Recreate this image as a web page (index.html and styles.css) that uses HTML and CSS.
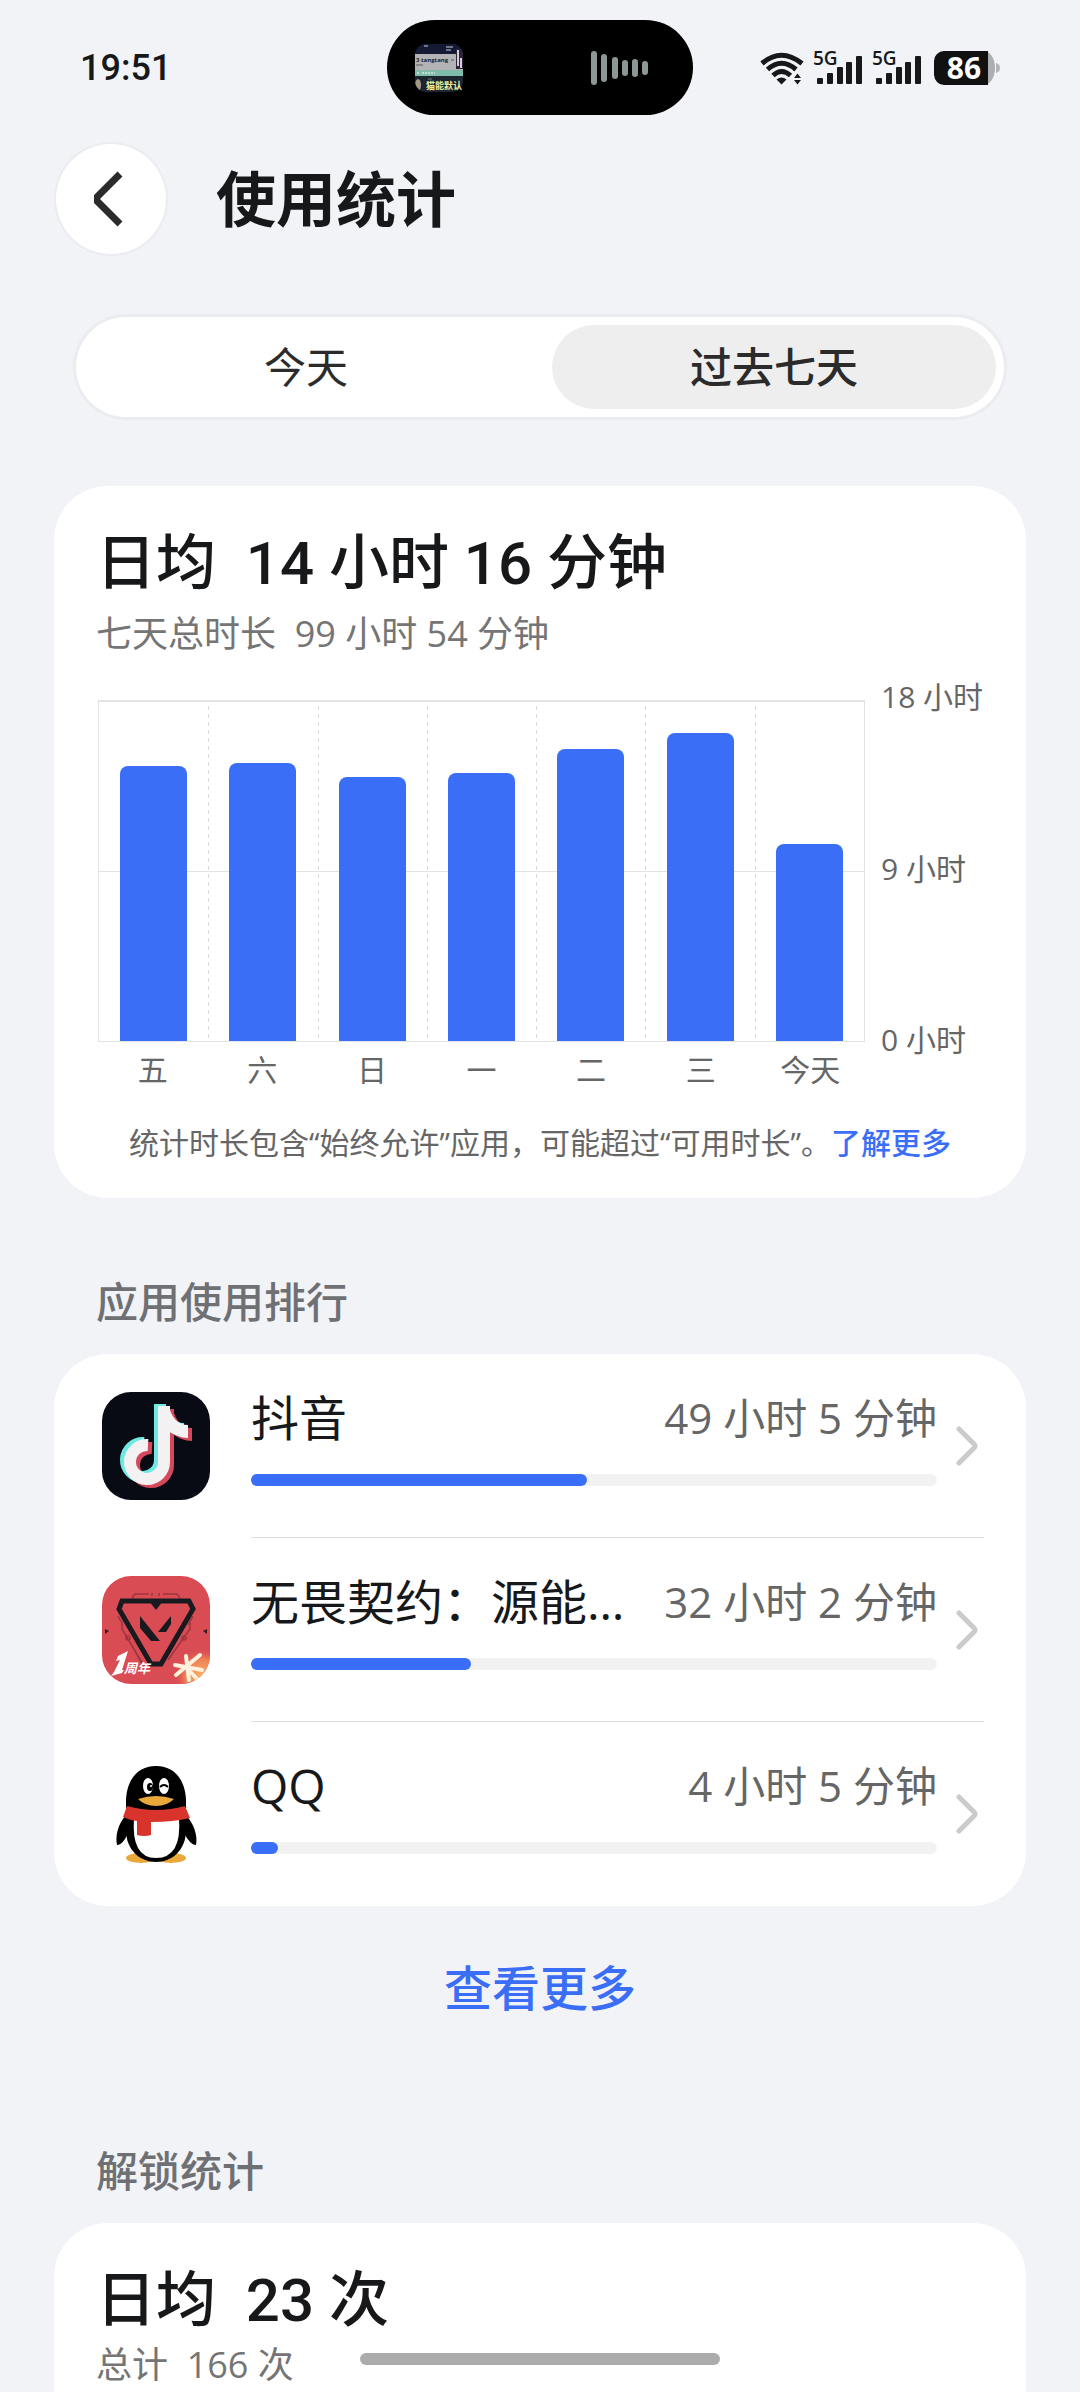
FILE: index.html
```html
<!DOCTYPE html>
<html lang="zh-CN">
<head>
  <meta charset="UTF-8" />
  <meta name="viewport" content="width=device-width, initial-scale=1.0"/>
  <title>使用统计</title>
  <link rel="stylesheet" href="styles.css">
</head>
<body>

  <div class="status-bar">
    <span class="time">19:51</span>
    <div class="island">
      <svg class="island-thumb" viewBox="0 0 48 48" width="48" height="48">
        <defs>
          <clipPath id="thumb"><rect width="48" height="48" rx="11"/></clipPath>
        </defs>
        <g clip-path="url(#thumb)">
          <rect width="48" height="48" fill="#1c2430"/>
          <rect width="48" height="10" fill="#141a33"/>
          <path d="M9 2h4M31 3h7M31 6h5" stroke="#8d93a8" stroke-width="1.5"/>
          <rect y="10" width="48" height="16" fill="#b3b3b6"/>
          <text x="1" y="18" class="thumb-name">3 tangtang</text>
          <path d="M1 21h7M36 16h3" stroke="#77777c" stroke-width="1.5"/>
          <rect y="26" width="48" height="6" fill="#7fbcab"/>
          <path d="M2 29h3M7 29h13" stroke="#cfe8df" stroke-width="1.5" stroke-dasharray="2 1"/>
          <rect x="41" y="5" width="7" height="20" fill="#2d2438"/>
          <path d="M43 6v16M46 14v10" stroke="#d8cbdc" stroke-width="2"/>
          <ellipse cx="3" cy="41" rx="3" ry="6" fill="#a39a86"/>
          <path d="M13 35h4" stroke="#777"/>
        </g>
        <text x="11" y="45" class="thumb-title">猫能默认</text>
      </svg>
      <svg viewBox="0 0 58 36" width="58" height="36" fill="#8b9896">
        <rect x="0" y="1" width="6" height="34" rx="3"/>
        <rect x="10" y="4" width="6" height="28" rx="3"/>
        <rect x="21" y="7" width="6" height="22" rx="3"/>
        <rect x="31" y="10" width="6" height="16" rx="3"/>
        <rect x="41" y="9" width="6" height="18" rx="3"/>
        <rect x="51" y="11" width="6" height="14" rx="3"/>
      </svg>
    </div>
    <div class="status-icons">
      <svg class="wifi" viewBox="0 0 44 34" width="44" height="34">
        <g fill="none" stroke="#17181a" stroke-width="5">
          <path d="M2 12.500Q21 -4 42 12.500"/>
          <path d="M7.500 18.500Q21.500 6 36 18.500"/>
          <path d="M13 24.500Q21.500 16.500 30.500 24.500"/>
        </g>
        <path d="M16.500 28.500Q21.500 24.500 26.500 28.500L21.500 33.500Z" fill="#17181a"/>
        <path d="M34 27L37.500 22.500L41 27ZM34 29L37.500 33.500L41 29Z" fill="#17181a"/>
      </svg>
      <svg class="signal" viewBox="0 -8 50 50" width="50" height="50" fill="#17181a">
        <text x="0" y="14" class="net-label">5G</text>
        <rect x="4" y="27" width="6" height="6" rx="1"/>
        <rect x="14" y="22" width="6" height="11" rx="1"/>
        <rect x="24" y="16" width="6" height="17" rx="1"/>
        <rect x="33" y="11" width="6" height="22" rx="1"/>
        <rect x="43" y="5" width="6" height="28" rx="1"/>
      </svg>
      <svg class="signal" viewBox="0 -8 50 50" width="50" height="50" fill="#17181a">
        <text x="0" y="14" class="net-label">5G</text>
        <rect x="4" y="27" width="6" height="6" rx="1"/>
        <rect x="14" y="22" width="6" height="11" rx="1"/>
        <rect x="24" y="16" width="6" height="17" rx="1"/>
        <rect x="33" y="11" width="6" height="22" rx="1"/>
        <rect x="43" y="5" width="6" height="28" rx="1"/>
      </svg>
      <svg class="battery" viewBox="0 -8 66 50" width="66" height="50">
        <path d="M50 0a11 17 0 0 1 0 34Z" fill="#adaeb1"/>
        <path d="M10 0H54V34H10A10 11 0 0 1 0 24V10A10 10 0 0 1 10 0Z" fill="#111"/>
        <path d="M62 12q4 1 4 5t-4 5Z" fill="#b4b5b8"/>
        <text x="30" y="28" text-anchor="middle" class="battery-level">86</text>
      </svg>
    </div>
  </div>

  <header class="header">
    <button class="back" aria-label="返回">
      <svg viewBox="0 0 30 56" width="30" height="56">
        <path d="M26 3L4 25Q1 28 4 31L26 53" fill="none" stroke="#2b2b2b" stroke-width="7"/>
      </svg>
    </button>
    <h1>使用统计</h1>
  </header>

  <div class="tabs">
    <button class="tab">今天</button>
    <button class="tab active">过去七天</button>
  </div>

  <section class="card usage">
    <h2>日均&nbsp; 14 小时 16 分钟</h2>
    <p class="total">七天总时长&nbsp; 99 小时 54 分钟</p>

    <div class="chart">
      <div class="plot">
        <div class="col"><div class="bar" style="height: 81%"></div></div>
        <div class="col"><div class="bar" style="height: 82%"></div></div>
        <div class="col"><div class="bar" style="height: 78%"></div></div>
        <div class="col"><div class="bar" style="height: 79%"></div></div>
        <div class="col"><div class="bar" style="height: 86%"></div></div>
        <div class="col"><div class="bar" style="height: 91%"></div></div>
        <div class="col"><div class="bar" style="height: 58%"></div></div>
      </div>
      <div class="hours">
        <span>18 小时</span>
        <span>9 小时</span>
        <span>0 小时</span>
      </div>
      <div class="days">
        <span>五</span>
        <span>六</span>
        <span>日</span>
        <span>一</span>
        <span>二</span>
        <span>三</span>
        <span>今天</span>
      </div>
    </div>

    <p class="note">统计时长包含“始终允许”应用，可能超过“可用时长”。<a href="#">了解更多</a></p>
  </section>

  <h3 class="section-title">应用使用排行</h3>
  <section class="card apps">
    <a class="app" href="#">
      <svg class="app-icon" viewBox="0 0 108 108" width="108" height="108">
        <defs>
          <g id="note">
            <path d="M46 52A17 17 0 1 0 62 69V13" fill="none" stroke-width="12"/>
            <path d="M67 13C69 24 76 32 86 32V45C79 45 72 42 67 38Z" stroke="none"/>
          </g>
        </defs>
        <rect width="108" height="108" rx="29" fill="#080a14"/>
        <use href="#note" x="4" y="4" stroke="#d5485c" fill="#d5485c"/>
        <use href="#note" x="-4" y="-1" stroke="#6eeae2" fill="#6eeae2"/>
        <use href="#note" x="0" y="1" stroke="#f3f1f2" fill="#f3f1f2"/>
      </svg>
      <div class="app-main">
        <div class="app-line">
          <span class="app-name">抖音</span>
          <span class="app-time">49 小时 5 分钟</span>
        </div>
        <div class="track"><div class="fill" style="width: 49%"></div></div>
      </div>
      <svg class="chevron" viewBox="0 0 22 40" width="22" height="40">
        <path d="M3 3L18 18Q20 20 18 22L3 37" fill="none" stroke="#cbcbcb" stroke-width="5" stroke-linecap="round"/>
      </svg>
    </a>

    <a class="app" href="#">
      <svg class="app-icon" viewBox="0 0 108 108" width="108" height="108">
        <defs>
          <clipPath id="tile"><rect width="108" height="108" rx="29"/></clipPath>
          <radialGradient id="flare">
            <stop offset="0" stop-color="#ffb066"/>
            <stop offset="0.600" stop-color="#ee8153"/>
            <stop offset="1" stop-color="#d94c54" stop-opacity="0"/>
          </radialGradient>
        </defs>
        <g clip-path="url(#tile)">
          <rect width="108" height="108" fill="#d94c54"/>
          <g fill="none" stroke="#9d3540" stroke-width="1.5">
            <path d="M30 22l3-4h14M61 18h14l3 4M50 17v3M57 17v3"/>
            <path d="M20 45v8l22 37M88 45v8L66 84M16 40l5 9M91 40l-5 9M30 70l14 25"/>
            <circle cx="26" cy="62" r="2"/>
            <circle cx="82" cy="62" r="2"/>
          </g>
          <path d="M20 25H87L91 33L59 88H49L17 33Z" fill="none" stroke="#181a20" stroke-width="5"/>
          <path d="M47 25H61L54 34Z" fill="#181a20"/>
          <path d="M38 40L58 65H49L38 52ZM69 40V48L64 56H56Z" fill="#181a20"/>
          <path d="M3 53l4 2-4 3ZM105 53l-4 2 4 3Z" fill="#3a1a20"/>
          <circle cx="100" cy="100" r="28" fill="url(#flare)"/>
          <path d="M84 80L87 104M98 79L74 99M73 89L100 94M84 91L95 103" stroke="#fff1dc" stroke-width="4" stroke-linecap="round"/>
          <path d="M16 80L26 75L20 94L22 94L20 97L9 100L12 96L18 84L14 85Z" fill="#fff"/>
          <text x="22" y="97" class="badge-text">周年</text>
        </g>
      </svg>
      <div class="app-main">
        <div class="app-line">
          <span class="app-name">无畏契约：源能…</span>
          <span class="app-time">32 小时 2 分钟</span>
        </div>
        <div class="track"><div class="fill" style="width: 32%"></div></div>
      </div>
      <svg class="chevron" viewBox="0 0 22 40" width="22" height="40">
        <path d="M3 3L18 18Q20 20 18 22L3 37" fill="none" stroke="#cbcbcb" stroke-width="5" stroke-linecap="round"/>
      </svg>
    </a>

    <a class="app" href="#">
      <svg class="app-icon" viewBox="0 0 108 108" width="108" height="108">
        <ellipse cx="39" cy="98" rx="15" ry="5" fill="#eba83a"/>
        <ellipse cx="69" cy="98" rx="15" ry="5" fill="#eba83a"/>
        <path d="M24 55C16 64 13 76 15 85C19 85 23 80 25 75ZM84 55C92 64 96 76 94 85C90 85 86 80 83 75Z"/>
        <path d="M54 6C34 6 24 22 24 42V70C24 90 38 102 54 102S84 90 84 70V42C84 22 74 6 54 6Z"/>
        <path d="M32 58H77Q80 98 54 98Q29 98 32 58Z" fill="#fff"/>
        <path d="M25 46Q54 54 83 46L88 58Q72 62 49 62V75Q42 77 35 75V61Q27 60 21 57Z" fill="#d9342b"/>
        <ellipse cx="46" cy="26" rx="5" ry="8" fill="#fff"/>
        <ellipse cx="62" cy="26" rx="5" ry="8" fill="#fff"/>
        <ellipse cx="48" cy="27" rx="3" ry="4"/>
        <circle cx="49" cy="26" r="1" fill="#fff"/>
        <path d="M58 27Q62 23 66 27" fill="none" stroke="#000" stroke-width="2"/>
        <path d="M36 39Q54 33 72 39Q65 46 54 46T36 39Z" fill="#eba83a"/>
      </svg>
      <div class="app-main">
        <div class="app-line">
          <span class="app-name">QQ</span>
          <span class="app-time">4 小时 5 分钟</span>
        </div>
        <div class="track"><div class="fill" style="width: 4%"></div></div>
      </div>
      <svg class="chevron" viewBox="0 0 22 40" width="22" height="40">
        <path d="M3 3L18 18Q20 20 18 22L3 37" fill="none" stroke="#cbcbcb" stroke-width="5" stroke-linecap="round"/>
      </svg>
    </a>
  </section>

  <a class="more" href="#">查看更多</a>

  <h3 class="section-title">解锁统计</h3>
  <section class="card unlocks">
    <h2>日均&nbsp; 23 次</h2>
    <p class="total">总计&nbsp; 166 次</p>
  </section>

  <div class="home-indicator"></div>

</body>
</html>
```

FILE: styles.css
```css
* {
  box-sizing: border-box;
}
body {
  margin: 0;
  min-height: 100vh;
  display: flex;
  flex-direction: column;
  font-family: "Open Sans", "Noto Sans CJK SC", sans-serif;
  background: #f1f3f7;
  color: #17181a;
}
h1, h2, h3, p {
  margin: 0;
}
a {
  color: inherit;
  text-decoration: none;
}
button {
  border: none;
  font-family: inherit;
  color: inherit;
  cursor: pointer;
}

/* status bar */
.status-bar {
  display: grid;
  grid-template-columns: 1fr 306px 1fr;
  align-items: center;
  padding: 20px 80px 0;
}
.time {
  font-family: Roboto, sans-serif;
  font-size: 36px;
  line-height: 48px;
  font-weight: 500;
}
.island {
  display: flex;
  align-items: center;
  justify-content: space-between;
  height: 95px;
  padding: 0 44px 0 28px;
  border-radius: 48px;
  background: #000;
}
.thumb-name {
  font-size: 6px;
  font-weight: 700;
  fill: #222;
}
.thumb-title {
  font-size: 9px;
  font-weight: 700;
  fill: #eef0a0;
}
.status-icons {
  display: flex;
  align-items: center;
  justify-content: flex-end;
  gap: 9px;
}
.battery {
  margin-left: 3px;
}
.net-label {
  font-size: 19px;
  font-weight: 600;
}
.battery-level {
  font-size: 30px;
  font-weight: 700;
  fill: #fff;
}

/* title */
.header {
  display: flex;
  align-items: center;
  gap: 50px;
  padding: 29px 56px 0;
}
.back {
  display: flex;
  align-items: center;
  justify-content: center;
  width: 110px;
  height: 110px;
  padding: 0 4px 0 0;
  border-radius: 50%;
  background: #fff;
  box-shadow: 0 0 0 2px #ebecf0;
}
h1 {
  font-size: 60px;
  line-height: 80px;
  font-weight: 700;
}

.tabs {
  display: flex;
  gap: 24px;
  margin: 63px 76px 0;
  padding: 8px;
  border-radius: 52px;
  background: #fff;
  box-shadow: 0 0 0 3px #ebecf0;
}
.tab {
  flex: 1;
  height: 84px;
  padding: 0;
  border-radius: 42px;
  background: none;
  font-size: 42px;
  line-height: 56px;
  font-weight: 400;
  color: #2b2b2b;
}
.active {
  background: #eee;
  font-weight: 500;
}

/* cards */
.card {
  margin: 0 54px;
  padding: 38px 42px 0;
  border-radius: 54px;
  background: #fff;
}
.usage {
  margin-top: 69px;
  padding-bottom: 35px;
}
h2 {
  font-family: Roboto, "Noto Sans CJK SC", sans-serif;
  font-size: 60px;
  line-height: 80px;
  font-weight: 500;
}
.total {
  margin-top: 6px;
  font-size: 36px;
  line-height: 48px;
  color: #757575;
}
.section-title {
  margin: 76px 96px 0;
  font-size: 42px;
  line-height: 56px;
  font-weight: 500;
  color: #6e7074;
}

/* chart */
.chart {
  display: grid;
  grid-template-columns: 1fr 103px;
  column-gap: 16px;
  margin: 42px 0 0 2px;
}
.plot {
  display: flex;
  height: 342px;
  border: solid #e3e3e3;
  border-width: 2px 1px 1px;
  background: linear-gradient(#e3e3e3, #e3e3e3) center / 100% 1px no-repeat;
}
.col {
  flex: 1;
  display: flex;
  align-items: flex-end;
  justify-content: center;
}
.col + .col {
  background: repeating-linear-gradient(transparent 0 4px, #d9d9d9 4px 8px) left / 1px 100% no-repeat;
}
.bar {
  width: 67px;
  border-radius: 8px 8px 0 0;
  background: #3b6ef7;
}
.hours {
  display: flex;
  flex-direction: column;
  justify-content: space-between;
  margin: -23px 0 -18px;
  font-size: 30px;
  line-height: 40px;
  color: #666;
  white-space: nowrap;
}
.days {
  display: flex;
  margin-top: 8px;
  font-size: 30px;
  line-height: 40px;
  color: #666;
  text-align: center;
}
.days span {
  flex: 1;
}
.note {
  margin-top: 33px;
  font-size: 30px;
  line-height: 40px;
  color: #666;
  text-align: center;
}
.note a {
  font-weight: 500;
  color: #3b6ef7;
}

/* app ranking */
.apps {
  margin-top: 24px;
  padding: 0 42px 0 48px;
}
.app {
  display: grid;
  grid-template-columns: 108px 1fr 22px;
  align-items: center;
  height: 184px;
  padding-right: 6px;
  column-gap: 41px;
  background: linear-gradient(#ddd, #ddd) 149px 100% / 100% 1px no-repeat;
}
.app:last-child {
  background: none;
}
.app-main {
  min-width: 0;
  margin-right: -22px;
  padding-bottom: 20px;
}
.app-line {
  display: flex;
  align-items: center;
  justify-content: space-between;
  gap: 36px;
  height: 64px;
}
.app-name {
  overflow: hidden;
  white-space: nowrap;
  text-overflow: ellipsis;
  font-size: 48px;
  line-height: 64px;
}
.app-time {
  flex-shrink: 0;
  font-size: 42px;
  line-height: 56px;
  color: #666;
}
.track {
  height: 12px;
  margin-top: 24px;
  border-radius: 6px;
  background: #f2f2f2;
}
.fill {
  height: 12px;
  border-radius: 6px;
  background: #3b6ef7;
}
.badge-text {
  font-size: 13px;
  font-weight: 700;
  font-style: italic;
  fill: #fff;
}

.more {
  align-self: center;
  margin-top: 50px;
  font-size: 48px;
  line-height: 64px;
  font-weight: 500;
  color: #3b6ef7;
}
.more + .section-title {
  margin-top: 123px;
}
.unlocks {
  flex: 1;
  margin-top: 24px;
  border-radius: 54px 54px 0 0;
}
.unlocks .total {
  margin-top: 0;
}

.home-indicator {
  position: fixed;
  bottom: 27px;
  left: 50%;
  width: 360px;
  height: 12px;
  margin-left: -180px;
  border-radius: 6px;
  background: #acacac;
}
```
